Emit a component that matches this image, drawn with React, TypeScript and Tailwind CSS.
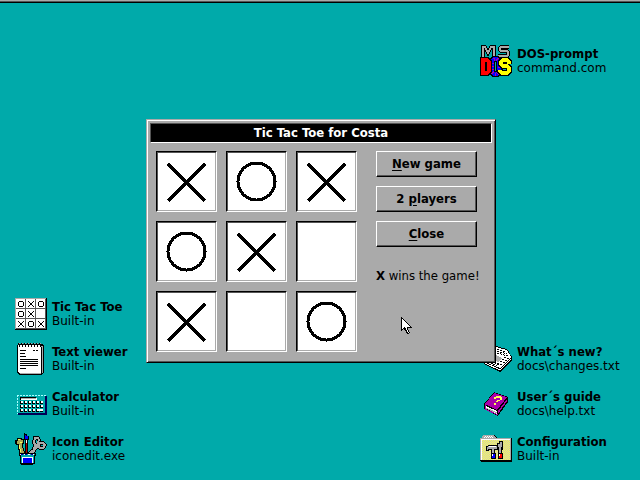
import React, { ReactNode } from "react";

const sans = "font-['DejaVu_Sans',sans-serif]";

function Sprite({ children }: { children: ReactNode }) {
  return (
    <svg
      viewBox="0 0 32 32"
      className="h-8 w-8 shrink-0"
      shapeRendering="crispEdges"
      aria-hidden="true"
    >
      {children}
    </svg>
  );
}

const miniBoard = ["OXO", "OX ", "XOX"];

function BoardIcon() {
  return (
    <Sprite>
      <path d="M0 0H32V32H0Z" fill="#000" />
      <path d="M0 0H31V31H0Z" fill="#aaa" />
      <path d="M1 1H31V31H1Z" fill="#555" />
      {miniBoard.map((row, r) =>
        [...row].map((mark, c) => {
          const x = 1 + c * 10;
          const y = 1 + r * 10;
          return (
            <g key={`${r}${c}`} transform={`translate(${x} ${y})`}>
              <path d="M0 0H10V10H0Z" fill="#555" />
              <path d="M0 0H9V9H0Z" fill="#fff" />
              {mark === "O" && (
                <path
                  d="M3 2h4v1h-4zM3 7h4v1h-4zM2 3h1v4h-1zM7 3h1v4h-1z"
                  fill="#000"
                />
              )}
              {mark === "X" && (
                <path
                  d="M2 2h1v1h-1zM7 2h1v1h-1zM3 3h1v1h-1zM6 3h1v1h-1zM4 4h2v2h-2zM3 6h1v1h-1zM6 6h1v1h-1zM2 7h1v1h-1zM7 7h1v1h-1z"
                  fill="#000"
                />
              )}
            </g>
          );
        }),
      )}
    </Sprite>
  );
}

function NotepadIcon() {
  return (
    <Sprite>
      <path d="M3 1H28V2H29V30H28V31H27V32H4V31H3V30H2V2H3Z" fill="#000" />
      <path d="M25 3H28V30H26V31H5V30H25Z" fill="#aaa" />
      <path d="M3 2H26V30H4V29H3Z" fill="#fff" />
      <path d="M26 4h1v26h-1z" fill="#000" />
      {[3, 6, 9, 12, 15, 18, 21, 24].map((x) => (
        <g key={x}>
          <path d={`M${x} 0h1v2h1v2h-1v-2h-1z`} fill="#000" />
          <path d={`M${x + 1} 0h1v1h-1z`} fill="#aaa" />
        </g>
      ))}
      <path
        d="M5 7h6v1h-6zM18 7h2v1h-2zM21 7h2v1h-2zM5 10h5v1h-5zM5 13h6v1h-6zM5 16h18v1h-18zM5 18h18v1h-18zM5 20h18v1h-18zM5 22h18v1h-18zM5 25h6v1h-6z"
        fill="#000"
      />
    </Sprite>
  );
}

function CalculatorIcon() {
  return (
    <Sprite>
      <path d="M3 8H32V27H3Z" fill="#000055" />
      <path d="M2 7H30V25H2Z" fill="#00aaaa" />
      <path d="M2 7.5H31M2.5 7V26" stroke="#aaffff" strokeDasharray="2 1" />
      <path d="M5 9h16v3h-16z" fill="#000" />
      <path d="M6 10h16v2h-16z" fill="#fff" />
      <path d="M6 10h15v1h-15z" fill="#aaa" />
      {[13, 17, 21].map((y) =>
        [5, 9, 13, 17, 21, 25].map((x) => (
          <g key={`${x}-${y}`}>
            <path d={`M${x} ${y}h3v3h-3z`} fill="#000" />
            <path d={`M${x + 1} ${y}h2v2h-2z`} fill="#fff" />
          </g>
        )),
      )}
      <path d="M22 21h6v2h-6z" fill="#fff" />
    </Sprite>
  );
}

const scissors =
  "M20 5H23L24 7L22 12H20L19 9ZM25 10H28L30 12L28 15H25L23 13ZM23 13L14 21M20 12L18 21";

function EditorIcon() {
  return (
    <Sprite>
      <path d="M2 5h5v1h2v5h-1v4h1v3h1v4h-6v-5h-1v-5h-2v-1h-1v-4h2z" fill="#000" />
      <path d="M3 6h3v1h2v3h-1v5h1v3h1v3h-4v-5h-1v-5h-2v-3h1z" fill="#aaaa55" />
      <path d="M3 6h2v1h-2zM5 9h2v1h-2zM4 12h1v4h1v3h-1" fill="#ffff55" />
      <path d={scissors} fill="none" stroke="#000" strokeWidth="4" />
      <path d={scissors} fill="none" stroke="#aaa" strokeWidth="2" />
      <path d="M21 7h1v3h-1zM26 12h2v1h-2z" fill="#00aaaa" />
      <path d="M9 0h1v1h2v2h2v4h-1v13h-3v-13h-1z" fill="#000" />
      <path d="M10 2h1v1h2v3h-3z" fill="#0000ff" />
      <path d="M11 7h1v3h-1z" fill="#fff" />
      <path d="M11 10h1v10h-1z" fill="#aa0000" />
      <path d="M4 20H21V23H20V31H18V32H6V31H5V23H4Z" fill="#000" />
      <path d="M5 21H20V22H19V30H6V22H5Z" fill="#00aaaa" />
      <path d="M5 21.5H20" stroke="#fff" strokeDasharray="2 2" />
      <path d="M6 21.5H8M10 21.5H12M16 21.5H18" stroke="#0000aa" />
      <path d="M7 24h11v6h-11z" fill="#fff" />
      <path d="M8 25h9v5h-9z" fill="#0000ff" />
    </Sprite>
  );
}

const dosD = "M3 15H7L9 17V26L7 28H3Z";
const dosO = "M14 14H17L19 16V27L17 29H14L12 27V16Z";
const dosS = "M29 19V17L27 15H23L21 17V19L23 21H27L29 23V26L27 28H22L20 26V25";
const msM = "M3 12V2H5L8 8L11 2H14V12";
const msS = "M29 2H21L20 3V5L21 6H27L28 7V10L27 11H18";

function DosIcon() {
  return (
    <Sprite>
      <g fill="none">
        <path d={msM} stroke="#000" strokeWidth="4" />
        <path d={msS} stroke="#000" strokeWidth="4" />
        <path d={msM} stroke="#aaa" strokeWidth="2" />
        <path d={msS} stroke="#aaa" strokeWidth="2" />
        <path d={dosO} stroke="#000" strokeWidth="6" />
        <path d={dosO} stroke="#0000ff" strokeWidth="4" />
        <path d={dosO} stroke="#aa00aa" strokeWidth="3" strokeDasharray="1 2" />
        <path d={dosD} stroke="#000" strokeWidth="6" />
        <path d={dosD} stroke="#ff0000" strokeWidth="4" />
        <path d={dosS} stroke="#000" strokeWidth="6" />
        <path d={dosS} stroke="#ffff00" strokeWidth="4" />
      </g>
    </Sprite>
  );
}

function NewsIcon() {
  return (
    <Sprite>
      <path d="M16 3L27 6L32 14V17L20 29L4 21V18Z" fill="#000" />
      <path d="M16 4L27 7L31 14L20 25L5 19Z" fill="#fff" />
      <path d="M31 16L20 27L5 20" stroke="#fff" fill="none" />
      <path
        d="M17 6L26 9M17 8L27 11M17 10L28 13M24 14L29 16M22 16L27 18M20 18L25 20M17 20L22 22M9 17L19 22M8 19L17 23M12 13L17 15"
        stroke="#000"
        strokeDasharray="2 1"
      />
      <path d="M16 12L22 15L18 19L12 17Z" fill="#aaa" />
    </Sprite>
  );
}

function BookIcon() {
  return (
    <Sprite>
      <path d="M14 4L28 9V14L18 28L4 21V16Z" fill="#000" />
      <path d="M14 5L27 9L17 22L5 16Z" fill="#aa00aa" />
      <path d="M6 18L17 23V26L6 20Z" fill="#fff" />
      <path d="M6 20L17 25" stroke="#aaa" />
      <path d="M18 23L27 11V13L18 26Z" fill="#aa00aa" />
      <path d="M5 16V21L18 27" stroke="#aa00aa" fill="none" />
      <path
        d="M14 9h2v-1h5v1h1v3h-2v1h-2v1h-2v-1h1v-1h3v-2h-4v1h-2zM14 15h2v2h-2z"
        fill="#ffff55"
      />
    </Sprite>
  );
}

function FolderIcon() {
  return (
    <Sprite>
      <defs>
        <pattern id="dither" width="2" height="2" patternUnits="userSpaceOnUse">
          <path d="M0 0H2V2H0Z" fill="#ffff55" />
          <path d="M0 0H1V1H0ZM1 1H2V2H1Z" fill="#c8c8b4" />
        </pattern>
        <pattern id="tab" width="2" height="2" patternUnits="userSpaceOnUse">
          <path d="M0 0H2V2H0Z" fill="#aaa" />
          <path d="M0 0H1V1H0ZM1 1H2V2H1Z" fill="#fff" />
        </pattern>
      </defs>
      <path d="M3 2H14L17 5H32V29H1V28H0V6H1Z" fill="#000" />
      <path d="M3 2H14L17 6H1Z" fill="#aaa" />
      <path d="M4 3H13L15 6H3Z" fill="url(#tab)" />
      <path d="M0 5H31V27H0Z" fill="#aaa" />
      <path d="M1 6H30V27H1Z" fill="#fff" />
      <path d="M2 7H30V27H2Z" fill="url(#dither)" />
      <path d="M6 13H8V12H18V17H15V21H11V17H9V18H6Z" fill="#000" />
      <path d="M7 14H8V13H17V16H8V17H7Z" fill="#aaa" />
      <path d="M9 13H16V14H9Z" fill="#fff" />
      <path d="M12 16H14V21H12Z" fill="#aaa" />
      <path d="M19 8H23V17H22V21H18V15H17V10H19Z" fill="#000" />
      <path d="M18 11H20V9H22V14H18ZM19 14H21V21H19Z" fill="#aaa" />
      <path d="M11 20H16V26H11ZM18 20H23V26H18Z" fill="#000" />
      <path d="M12 21H15V25H12Z" fill="#0000ff" />
      <path d="M19 21H22V25H19Z" fill="#ff0000" />
      <path d="M12 21H13V23H12ZM19 21H20V23H19Z" fill="#fff" />
    </Sprite>
  );
}

type Launcher = { title: string; detail: string; icon: ReactNode };

const leftLaunchers: Launcher[] = [
  { title: "Tic Tac Toe", detail: "Built-in", icon: <BoardIcon /> },
  { title: "Text viewer", detail: "Built-in", icon: <NotepadIcon /> },
  { title: "Calculator", detail: "Built-in", icon: <CalculatorIcon /> },
  { title: "Icon Editor", detail: "iconedit.exe", icon: <EditorIcon /> },
];

const rightLaunchers: Launcher[] = [
  { title: "What´s new?", detail: "docs\\changes.txt", icon: <NewsIcon /> },
  { title: "User´s guide", detail: "docs\\help.txt", icon: <BookIcon /> },
  { title: "Configuration", detail: "Built-in", icon: <FolderIcon /> },
];

function LauncherButton({ title, detail, icon }: Launcher) {
  return (
    <button type="button" className="flex h-[45px] items-center gap-[5px] text-left">
      {icon}
      <span className="flex flex-col text-[12px] leading-[14px] whitespace-nowrap">
        <span className="font-['DejaVu_Sans_Condensed','DejaVu_Sans',sans-serif] text-[13px] leading-[14px] font-bold">
          {title}
        </span>
        <span>{detail}</span>
      </span>
    </button>
  );
}

function Cell({ mark, label }: { mark: string; label: string }) {
  return (
    <button
      type="button"
      aria-label={label}
      className="h-[61px] w-[61px] border border-t-black border-r-white border-b-white border-l-black bg-white shadow-[inset_1px_1px_0_#555,inset_-1px_-1px_0_#aaa]"
    >
      <svg viewBox="1 1 59 59" className="h-full w-full" shapeRendering="crispEdges" aria-hidden="true">
        {mark === "X" && (
          <path d="M12 13L49 50M49 13L12 50" stroke="#000" strokeWidth="3" fill="none" />
        )}
        {mark === "O" && (
          <circle cx="30.5" cy="30.5" r="18.5" stroke="#000" strokeWidth="3" fill="none" />
        )}
      </svg>
    </button>
  );
}

function PushButton({ children }: { children: ReactNode }) {
  return (
    <button
      type="button"
      className="h-[26px] border border-t-white border-r-black border-b-black border-l-white text-center text-[13px] leading-[14px] font-bold shadow-[inset_-1px_-1px_0_#555]"
    >
      {children}
    </button>
  );
}

const board = ["X", "O", "X", "O", "X", "", "X", "", "O"];

function GameWindow() {
  return (
    <section
      aria-label="Tic Tac Toe for Costa"
      className="relative border border-t-[#aaa] border-r-black border-b-black border-l-[#aaa] bg-[#aaa] p-[3px] shadow-[inset_1px_1px_0_#fff,inset_-1px_-1px_0_#555]"
    >
      <h1 className="h-5 border border-t-[#555] border-r-white border-b-white border-l-[#555] bg-black text-center font-['DejaVu_Sans_Condensed','DejaVu_Sans',sans-serif] text-[13px] leading-[18px] font-bold text-white">
        Tic Tac Toe for Costa
      </h1>
      <div className="flex gap-[19px] pt-2 pr-[15px] pb-[7px] pl-[6px]">
        <div className="grid grid-cols-3 gap-[9px]">
          {board.map((mark, i) => (
            <Cell key={i} mark={mark} label={`Square ${i + 1} ${mark}`} />
          ))}
        </div>
        <div className="flex w-[101px] flex-col gap-[9px] font-['DejaVu_Sans_Condensed','DejaVu_Sans',sans-serif]">
          <PushButton>
            <u className="underline-offset-2">N</u>ew game
          </PushButton>
          <PushButton>
            2 <u className="underline-offset-2">p</u>layers
          </PushButton>
          <PushButton>
            <u className="underline-offset-2">C</u>lose
          </PushButton>
          <p className="pt-[13px] text-[13px] leading-[14px] whitespace-nowrap">
            <b>X</b> wins the game!
          </p>
        </div>
      </div>
      <svg
        viewBox="0 0 12 17"
        className="absolute top-[197px] left-[254px] h-[17px] w-3"
        shapeRendering="crispEdges"
        aria-hidden="true"
      >
        <path
          d="M0 0h1v1h1v1h1v1h1v1h1v1h1v1h1v1h1v1h1v1h1v1h1v1h-4v2h1v2h1v1h-1v1h-2v-1h-1v-2h-1v-1h-1v-1h-1v1h-1v1h-1z"
          fill="#000"
        />
        <path
          d="M1 2h1v1h1v1h1v1h1v1h1v1h1v1h1v1h1v1h-3v3h1v2h1v1h-1v-1h-1v-2h-1v-2h-1v-1h-1v1h-1v1h-1z"
          fill="#fff"
        />
      </svg>
    </section>
  );
}

export default function App() {
  return (
    <div className={`relative flex h-screen flex-col overflow-hidden bg-[#00aaaa] text-black ${sans}`}>
      <div className="h-[3px] border-t border-b border-t-[#aaa] border-b-black bg-[#555]" />
      <main className="flex flex-1 justify-between pb-[9px]">
        <nav aria-label="Programs" className="flex flex-col justify-end pl-[15px]">
          {leftLaunchers.map((l) => (
            <LauncherButton key={l.title} {...l} />
          ))}
        </nav>
        <nav aria-label="System" className="flex w-40 flex-col pt-[35px]">
          <div className="mb-auto">
            <LauncherButton title="DOS-prompt" detail="command.com" icon={<DosIcon />} />
          </div>
          {rightLaunchers.map((l) => (
            <LauncherButton key={l.title} {...l} />
          ))}
        </nav>
      </main>
      <div className="absolute inset-0 flex items-center justify-center pt-0.5 pl-0.5">
        <GameWindow />
      </div>
    </div>
  );
}
